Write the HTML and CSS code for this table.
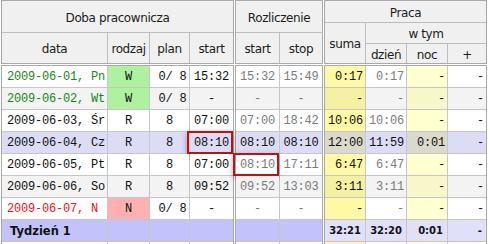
FILE: index.html
```html
<!DOCTYPE html>
<html lang="pl">
<head>
<meta charset="utf-8">
<title>Doba pracownicza</title>
<link rel="stylesheet" href="styles.css">
</head>
<body>
<div class="sheet">
  <div class="band head">
    <div class="grp g1 h1">
      <div class="hc span4">Doba pracownicza</div>
      <div class="hc">data</div>
      <div class="hc">rodzaj</div>
      <div class="hc">plan</div>
      <div class="hc">start</div>
    </div>
    <div class="grp g2 h1">
      <div class="hc span2">Rozliczenie</div>
      <div class="hc">start</div>
      <div class="hc">stop</div>
    </div>
    <div class="grp g3 h3">
      <div class="hc span4">Praca</div>
      <div class="hc rspan2">suma</div>
      <div class="hc span3">w tym</div>
      <div class="hc">dzień</div>
      <div class="hc">noc</div>
      <div class="hc">+</div>
    </div>
  </div>

  <div class="band rows">
    <div class="grp g1 b">
      <div class="c date green">2009-06-01, Pn</div><div class="c mid kind-w">W</div><div class="c plan off">0/ 8</div><div class="c mid">15:32</div>
      <div class="c date green alt">2009-06-02, Wt</div><div class="c mid kind-w">W</div><div class="c plan off alt">0/ 8</div><div class="c mid alt">-</div>
      <div class="c date">2009-06-03, Śr</div><div class="c mid">R</div><div class="c plan">8</div><div class="c mid">07:00</div>
      <div class="c date sel">2009-06-04, Cz</div><div class="c mid sel">R</div><div class="c plan sel">8</div><div class="c mid sel mark">08:10</div>
      <div class="c date">2009-06-05, Pt</div><div class="c mid">R</div><div class="c plan">8</div><div class="c mid">07:00</div>
      <div class="c date alt">2009-06-06, So</div><div class="c mid alt">R</div><div class="c plan alt">8</div><div class="c mid alt">09:52</div>
      <div class="c date red">2009-06-07, N</div><div class="c mid kind-n">N</div><div class="c plan off">0/ 8</div><div class="c mid">-</div>
      <div class="c week wk-label">Tydzień 1</div><div class="c week"></div><div class="c week"></div><div class="c week"></div>
      <div class="c"></div><div class="c"></div><div class="c"></div><div class="c"></div>
    </div>
    <div class="grp g2 b">
      <div class="c mid dim">15:32</div><div class="c mid dim">15:49</div>
      <div class="c mid dim alt">-</div><div class="c mid dim alt">-</div>
      <div class="c mid dim">07:00</div><div class="c mid dim">18:42</div>
      <div class="c mid sel">08:10</div><div class="c mid sel">08:10</div>
      <div class="c mid dim mark">08:10</div><div class="c mid dim">17:11</div>
      <div class="c mid dim alt">09:52</div><div class="c mid dim alt">13:03</div>
      <div class="c mid dim">-</div><div class="c mid dim">-</div>
      <div class="c week"></div><div class="c week"></div>
      <div class="c"></div><div class="c"></div>
    </div>
    <div class="grp g3 b">
      <div class="c num sum">0:17</div><div class="c num dim">0:17</div><div class="c num night">-</div><div class="c num">-</div>
      <div class="c num sum alt">-</div><div class="c num dim alt">-</div><div class="c num night alt">-</div><div class="c num alt">-</div>
      <div class="c num sum">10:06</div><div class="c num dim">10:06</div><div class="c num night">-</div><div class="c num">-</div>
      <div class="c num sum sel">12:00</div><div class="c num sel">11:59</div><div class="c num night sel">0:01</div><div class="c num sel">-</div>
      <div class="c num sum">6:47</div><div class="c num dim">6:47</div><div class="c num night">-</div><div class="c num">-</div>
      <div class="c num sum alt">3:11</div><div class="c num dim alt">3:11</div><div class="c num night alt">-</div><div class="c num alt">-</div>
      <div class="c num sum">-</div><div class="c num dim">-</div><div class="c num night">-</div><div class="c num">-</div>
      <div class="c num week2 tot">32:21</div><div class="c num week2 tot">32:20</div><div class="c num week2 tot">0:01</div><div class="c num week2 tot">-</div>
      <div class="c sum"></div><div class="c"></div><div class="c night"></div><div class="c"></div>
    </div>
  </div>
</div>
</body>
</html>
```

FILE: styles.css
```css
html, body {
  margin: 0;
  padding: 0;
  background: #ffffff;
}

.sheet {
  width: 487px;
  display: flex;
  flex-direction: column;
  gap: 1px;
}

.band {
  display: flex;
  gap: 1px;
  align-items: flex-start;
}

.grp {
  display: grid;
  gap: 1px;
  border: 1px solid #a9a9a9;
  background: #c6c6c6;
}

.g1 { grid-template-columns: 105px 41px 39px 43px; margin-left: 1px; }
.g2 { grid-template-columns: 43px 42px; }
.g3 { grid-template-columns: 40px 40px 40px 38px; }

.h1 { grid-template-rows: 31px 30px; }
.h3 { grid-template-rows: 21px 20px 19px; }
.head .grp { background: #bdbdbd; }

.b { grid-auto-rows: 21px; }

.hc {
  background: #f0f0f0;
  display: flex;
  align-items: center;
  justify-content: center;
  font-family: "DejaVu Sans", Verdana, sans-serif;
  font-size: 12px;
  letter-spacing: -0.4px;
  color: #1c1c1c;
  padding-top: 2px;
  box-sizing: border-box;
}

.span4 { grid-column: span 4; }
.span3 { grid-column: span 3; }
.span2 { grid-column: span 2; }
.rspan2 { grid-row: span 2; }

.c {
  background: #ffffff;
  display: flex;
  align-items: center;
  font-family: "Liberation Mono", "Courier New", monospace;
  font-size: 12px;
  letter-spacing: -0.2px;
  color: #111111;
  white-space: nowrap;
  position: relative;
  box-sizing: border-box;
}

.date { padding-left: 5px; }
.mid { justify-content: center; }
.plan { justify-content: center; }
.plan.off { padding-left: 6px; }
.num { justify-content: flex-end; padding-right: 2px; }

.green { color: #138a13; }
.red { color: #ee1111; }
.dim { color: #7a7a7a; }

.alt { background: #f3f3f3; }
.sel { background: #dcdcf6; }

.kind-w { background: #aef2a0; }
.kind-n { background: #ffb0b0; }

.sum { background: #fff9a6; }
.sum.alt { background: #f5f0a2; }
.sum.sel { background: #dadacc; }
.night { background: #ffffd0; }
.night.alt { background: #f7f7ca; }
.night.sel { background: #dadacc; }

.week { background: #c3c3fb; }
.week2 { background: #e0e0f8; }
.wk-label {
  font-family: "DejaVu Sans", Verdana, sans-serif;
  font-weight: bold;
  font-size: 11.5px;
  letter-spacing: 0;
  padding-left: 8px;
  color: #111111;
}
.tot {
  font-family: "DejaVu Sans", Verdana, sans-serif;
  font-weight: bold;
  font-size: 10px;
  letter-spacing: 0;
  padding-right: 4px;
}

.mark::after {
  content: "";
  position: absolute;
  left: -3px;
  top: -1px;
  right: 0;
  bottom: -1px;
  border: 2px solid #c01010;
  box-shadow: 0 2px 6px rgba(0, 0, 0, 0.35);
  pointer-events: none;
}
```
